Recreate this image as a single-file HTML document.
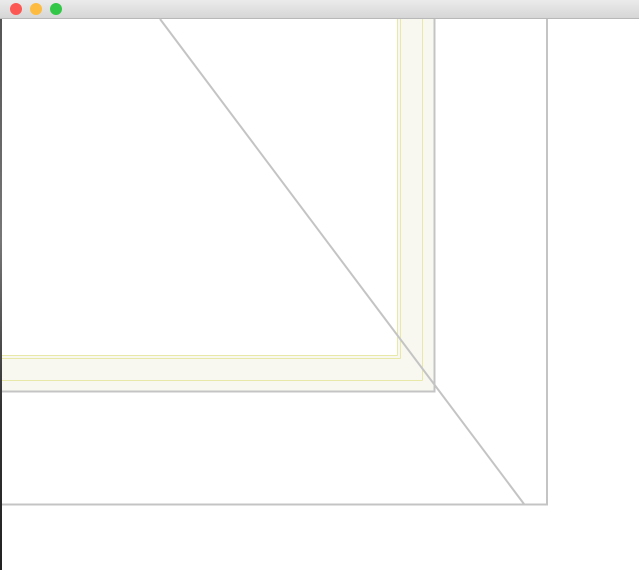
<!DOCTYPE html>
<html><head><style>
html,body{margin:0;padding:0;width:639px;height:570px;overflow:hidden;background:#fff;position:relative;font-family:"Liberation Sans",sans-serif}
.bar{position:absolute;left:0;top:0;width:639px;height:18px;background:linear-gradient(#ebebeb,#d6d6d6);border-bottom:1px solid #b8b8b8}
.dot{position:absolute;top:3px;width:12px;height:12px;border-radius:50%}
.strip{position:absolute;left:0;top:19px;width:2px;height:551px;background:linear-gradient(#555,#777 40%,#333 70%,#222)}
</style></head><body>
<div class="bar">
<div class="dot" style="left:10px;background:#fc5753;border:0 solid #df4744"></div>
<div class="dot" style="left:30px;background:#fdbc40"></div>
<div class="dot" style="left:50px;background:#33c748"></div>
</div>
<div class="strip"></div>
<svg width="639" height="570" style="position:absolute;left:0;top:0">
<rect x="2" y="19" width="432" height="372" fill="#f8f8f0"/>
<rect x="2" y="19" width="395" height="336" fill="#fff"/>
<line x1="397.5" y1="19" x2="397.5" y2="355.5" stroke="#e8e8a8" stroke-width="1"/>
<line x1="2" y1="355.5" x2="397.5" y2="355.5" stroke="#e8e8a8" stroke-width="1"/>
<line x1="400.5" y1="19" x2="400.5" y2="358.5" stroke="#e8e8a8" stroke-width="1"/>
<line x1="2" y1="358.5" x2="400.5" y2="358.5" stroke="#e8e8a8" stroke-width="1"/>
<line x1="422.5" y1="19" x2="422.5" y2="380.5" stroke="#e8e8a8" stroke-width="1"/>
<line x1="2" y1="380.5" x2="422.5" y2="380.5" stroke="#e8e8a8" stroke-width="1"/>
<polyline points="434.5,19 434.5,391.5 2,391.5" fill="none" stroke="#c4c4c4" stroke-width="2"/>
<polyline points="547,19 547,504.5 2,504.5" fill="none" stroke="#c4c4c4" stroke-width="2"/>
<line x1="160" y1="19" x2="524" y2="504" stroke="#c4c4c4" stroke-width="2"/>
</svg>
</body></html>
